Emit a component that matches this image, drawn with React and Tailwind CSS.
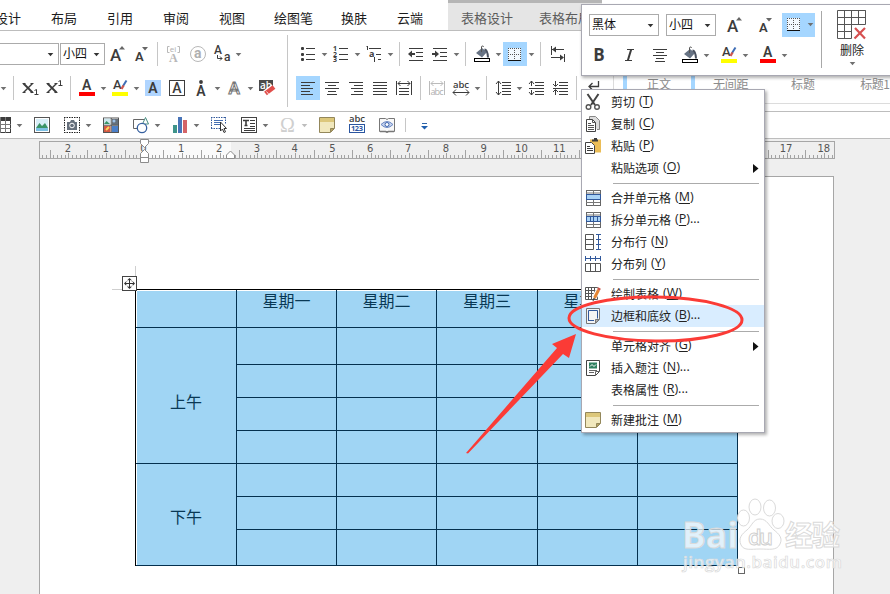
import React from "react";

const INK = "#3c3c3c";

function Icon({ children, w = 16, h = 16, className = "" }) {
  return (
    <svg width={w} height={h} viewBox={`0 0 ${w} ${h}`} fill="none" stroke={INK} className={`shrink-0 overflow-visible ${className}`}>
      {children}
    </svg>
  );
}

function Arrow({ className = "mx-1.5", color = "#707070" }) {
  return (
    <svg width="5" height="3" viewBox="0 0 5 3" className={`shrink-0 overflow-visible ${className}`}>
      <path d="M-.3 0H5.3L2.5 3.2z" fill={color} />
    </svg>
  );
}

const Sep = ({ className = "h-6" }) => <div className={`w-px shrink-0 bg-[#c6c6c6] ${className}`} />;

function Lines({ rows }) {
  return rows.map(([x1, x2, y]) => <path key={y} d={`M${x1} ${y + 0.5}H${x2}`} />);
}

function T({ x, y, s, children, fill = INK, ...rest }) {
  return (
    <text x={x} y={y} fontSize={s} fill={fill} stroke="none" fontFamily="Open Sans, sans-serif" {...rest}>
      {children}
    </text>
  );
}

const Grow = () => (
  <Icon>
    <T x="0" y="15" s="17" fontWeight="500" fontFamily="Roboto, sans-serif">A</T>
    <path d="M9 3.500h6L12 0z" fill="#666" stroke="none" />
  </Icon>
);
const Shrink = () => (
  <Icon>
    <T x="1" y="15" s="13" fontWeight="600" fontFamily="Roboto, sans-serif">A</T>
    <path d="M8 1h6L11 4.500z" fill="#666" stroke="none" />
  </Icon>
);
const Phonetic = () => (
  <Icon>
    <path d="M3.500 .5H1.500v6h2M11.500 .5h2v6h-2" stroke="#b8b8b8" />
    <T x="3.800" y="6" s="8" fill="#b0b0b0">ei</T>
    <T x="3" y="16" s="12" fill="#b8b8b8" fontFamily="Liberation Serif, serif" fontWeight="700">A</T>
  </Icon>
);
const Circled = () => (
  <Icon>
    <circle cx="8" cy="8" r="7.500" stroke="#b8b8b8" />
    <T x="4" y="12" s="14" fill="#b0b0b0" fontWeight="700" fontFamily="Roboto, sans-serif">a</T>
  </Icon>
);
const ChangeCase = () => (
  <Icon>
    <T x="0" y="8" s="12" fontFamily="Roboto, sans-serif" fontWeight="500">A</T>
    <T x="10" y="15" s="12" fontFamily="Roboto, sans-serif" fontWeight="500">a</T>
    <path d="M3.500 9v3.500H8M6 10.500l2 2-2 2" />
  </Icon>
);
const Script = ({ sup }) => (
  <Icon>
    <path d="M1.500 3.500L10.500 12.500" strokeWidth="2" />
    <path d="M10.500 3.500L1.500 12.500" strokeWidth="1.500" />
    <path d="M.5 3.500h3M8.500 3.500h3M.5 12.500h3M8.500 12.500h3" />
    <path d={sup ? "M12.500 1.500l2-1V5.500M12.500 5.500h4" : "M12.500 10.500l2-1v5M12.500 14.500h4"} />
  </Icon>
);
const FontColor = () => (
  <Icon>
    <T x="3" y="10" s="14" fontWeight="600" fontFamily="Roboto, sans-serif">A</T>
    <rect x="0" y="12" width="16" height="4" fill="#f00" stroke="none" />
  </Icon>
);
const Marker = () => (
  <Icon>
    <T x="1" y="9" s="13" fontWeight="500" fontFamily="Roboto, sans-serif">A</T>
    <path d="M14.500 .5L11 6" stroke="#3e6db5" strokeWidth="2" />
    <path d="M11.500 5.500L9.500 9" stroke="#d0584f" strokeWidth="2.400" />
    <rect x="0" y="12" width="16" height="4" fill="#ff0" stroke="none" />
  </Icon>
);
const Shaded = () => (
  <Icon>
    <rect width="16" height="16" fill="#b0d5ff" stroke="none" />
    <T x="3.300" y="13" s="14" fontWeight="600" fontFamily="Roboto, sans-serif">A</T>
  </Icon>
);
const Boxed = () => (
  <Icon>
    <rect x=".5" y=".5" width="15" height="15" />
    <T x="3.300" y="13" s="14" fontWeight="500" fontFamily="Roboto, sans-serif">A</T>
  </Icon>
);
const Dotted = () => (
  <Icon>
    <circle cx="8" cy="2" r="1.900" fill={INK} stroke="none" />
    <T x="3.300" y="16" s="14" fontWeight="600" fontFamily="Roboto, sans-serif">A</T>
  </Icon>
);
const Outlined = () => (
  <Icon>
    <T x="2.500" y="14" s="17" fill="#fff" fontWeight="600" strokeWidth="1" fontFamily="Roboto, sans-serif" style={{ stroke: "#777" }}>A</T>
  </Icon>
);
const Eraser = () => (
  <Icon>
    <rect x="0" y="0" width="14" height="11" fill="#4a4a4a" stroke="none" />
    <T x="1" y="9" s="10" fill="#fff" fontWeight="600">ab</T>
    <path d="M6 13.500L14.500 7" stroke="#fff" strokeWidth="6.500" />
    <path d="M6.500 13.500L15 7" stroke="#e14e4a" strokeWidth="4.500" />
    <path d="M7.500 11.500l2.500 3" stroke="#fff" strokeWidth=".8" />
  </Icon>
);
const Bullets = () => (
  <Icon>
    {[2, 8, 13].map((y) => (
      <React.Fragment key={y}>
        <rect x="1" y={y - 1} width="3" height="3" rx="1" fill={INK} stroke="none" />
        <path d={`M6 ${y + 0.5}H15`} />
      </React.Fragment>
    ))}
  </Icon>
);
const Numbering = () => (
  <Icon>
    {[1, 2, 3].map((n) => (
      <T key={n} x="0" y={n * 5.400} s="7" fontWeight="700">{n}</T>
    ))}
    <Lines rows={[[6, 15, 2], [6, 15, 8], [6, 15, 13]]} />
  </Icon>
);
const Multilevel = () => (
  <Icon>
    <path d="M.5 1l1-1v4M3 2.500h12M10 8.500h5M12 13.500h3M8.500 11v5" />
    <T x="3" y="11" s="9" fontWeight="700">a</T>
  </Icon>
);
const Indent = ({ right }) => (
  <Icon>
    <path d="M1 2.500h14M8 6.500h7M8 10.500h7M1 14.500h14" strokeWidth="1.100" />
    <path d={right ? "M0 8h3" : "M3 8h4"} strokeWidth="2" />
    <path d={right ? "M3 4.500L7 8 3 11.500z" : "M4 4.500L0 8l4 3.500z"} fill={INK} stroke="none" />
  </Icon>
);
const Bucket = () => (
  <Icon>
    <path d="M8 2L2 7l6 4.500L13 6z" fill="#677384" stroke="none" />
    <path d="M7.500 6V1a1 1 0 0 1 2 0" stroke="#555" strokeWidth="1" />
    <path d="M10.500 3.500q3 0 3.500 8" stroke="#4a5260" strokeWidth="2" />
    <rect x=".5" y="12.500" width="15" height="3" fill="#fff" stroke="#000" />
  </Icon>
);
const Borders = () => (
  <Icon w={13} h={14}>
    <rect width="13" height="13" fill="#fff" stroke="none" opacity=".85" />
    <path d="M0 .5h13M.5 0v12M6.500 0v12M12.500 0v12M0 6.500h13" stroke="#555" strokeDasharray="1 1" />
    <path d="M0 12.500h13" stroke="#111" strokeWidth="1" />
  </Icon>
);
const TabStops = () => (
  <Icon>
    <path d="M2.500 0v9M15.500 8v8M3 3.500h12M2 11.500h12" />
    <path d="M3 3.500l4-3v6zM15 11.500l-4-3v6z" fill={INK} stroke="none" />
  </Icon>
);
const Align = ({ kind }) => {
  const rows = {
    left: [[1, 15, 2], [1, 10, 5], [1, 13, 8], [1, 10, 11], [1, 13, 14]],
    center: [[1, 15, 2], [4, 12, 5], [1, 15, 8], [4, 12, 11], [3, 13, 14]],
    right: [[1, 15, 2], [6, 15, 5], [3, 15, 8], [6, 15, 11], [3, 15, 14]],
    full: [[1, 15, 2], [1, 15, 5], [1, 15, 8], [1, 15, 11], [1, 15, 14]],
  };
  return <Icon><Lines rows={rows[kind]} /></Icon>;
};
const Distribute = () => (
  <Icon>
    <path d="M.5 1v14M15.500 1v14M2 3.500h12M4.500 1L2 3.500 4.500 6M11.500 1L14 3.500 11.500 6M3 8.500h10M3 11.500h10M3 14.500h10" />
  </Icon>
);
const FitText = () => (
  <Icon>
    <path d="M.5 1v14M15.500 1v14M2 3.500h12M4.500 1L2 3.500 4.500 6M11.500 1L14 3.500 11.500 6" stroke="#bbb" />
    <T x="1.500" y="14.500" s="9" fill="#b0b0b0" textLength="13">abc</T>
  </Icon>
);
const CharScale = () => (
  <Icon>
    <T x="0" y="7.500" s="9.500" fontWeight="600" textLength="16">abc</T>
    <path d="M0 12.500h16M3 9.500l-3 3 3 3M13 9.500l3 3-3 3" />
  </Icon>
);
const LineSpacing = () => (
  <Icon>
    <path d="M3.500 1v14M1 4l2.500-3L6 4M1 12l2.500 3L6 12" />
    <Lines rows={[[7, 16, 2], [7, 16, 5], [7, 16, 8], [7, 16, 11], [7, 16, 14]]} />
  </Icon>
);
const ParaSpace = ({ down }) => (
  <Icon>
    <path d={down ? "M3.500 1v5M1 4l2.500 2.500L6 4M3.500 15v-5M1 12l2.500-2.500L6 12" : "M3.500 6V1M1 4l2.500-3L6 4M3.500 10v5M1 12l2.500 3L6 12"} />
    <Lines rows={[[7, 16, 2], [7, 16, 5], [1, 16, 8], [7, 16, 11], [7, 16, 14]]} />
  </Icon>
);

const TableIcon = () => (
  <Icon className="-ml-[5px]">
    <rect x=".5" y=".5" width="15" height="15" fill="#fff" />
    <path d="M0 2h16" strokeWidth="4" />
    <path d="M0 7.500h16M0 11.500h16M5.500 0v16M10.500 0v16" stroke="#777" />
  </Icon>
);
const Picture = () => (
  <Icon>
    <rect x=".5" y=".5" width="15" height="15" fill="#fff" stroke="#555" />
    <rect x="2" y="2" width="12" height="9" fill="#d8eef8" stroke="none" />
    <path d="M2 11l3.500-5L8 9l3-3 3 5z" fill="#3a9468" stroke="none" />
    <path d="M2 12.500h12" stroke="#7cc0e4" strokeWidth="3" />
  </Icon>
);
const Camera = () => (
  <Icon>
    <path d="M.5 0v16M15.500 0v16M0 .5h16M0 15.500h16" strokeDasharray="1.500 1" stroke="#222" />
    <path d="M3 5h3l1-2h3l1 2h2v8H3z" fill="#66707c" stroke="none" />
    <circle cx="8" cy="8.500" r="2.300" stroke="#fff" />
  </Icon>
);
const ClipArt = () => (
  <Icon>
    <rect x=".5" y="1" width="15" height="14.500" fill="#fff" stroke="#555" />
    <rect x="1" y="1.500" width="6.500" height="6" fill="#cfe7ee" stroke="none" />
    <path d="M1 7l2.500-3L7 7z" fill="#3a9468" stroke="none" />
    <rect x="9" y="2" width="6" height="6" fill="#65707c" stroke="none" />
    <circle cx="11" cy="4" r="1.500" fill="#9fc2e8" stroke="none" />
    <rect x="1" y="9" width="6.500" height="6" fill="#d45a45" stroke="none" />
    <path d="M3 13l3-3" stroke="#ffd55a" strokeWidth="2" />
    <rect x="9" y="9" width="6" height="6" fill="#4b7fc8" stroke="none" />
    <path d="M8.250 1v15M1 8.250h14" stroke="#555" />
  </Icon>
);
const Shapes = () => (
  <Icon>
    <path d="M5 11.500H.5v-9H11" stroke="#666" />
    <path d="M12.500 .5L9.500 7h6z" stroke="#488b80" fill="#fff" />
    <circle cx="9" cy="11" r="4.700" fill="#fff" stroke="#36609f" strokeWidth="1.300" />
  </Icon>
);
const Chart = () => (
  <Icon>
    <rect x="1" y="8" width="4" height="8" fill="#3e948a" stroke="none" />
    <rect x="6" y="0" width="4" height="16" fill="#4874b8" stroke="none" />
    <rect x="11" y="3" width="4" height="13" fill="#d46468" stroke="none" />
  </Icon>
);
const SelectPane = () => (
  <Icon>
    <path d="M.5 0v12M14.500 0v7M0 .5h15M0 11.500h9" strokeDasharray="1.500 1" stroke="#31589b" />
    <path d="M3 3.500h9M3 5.500h6M3 7.500h6" stroke="#456fb3" />
    <path d="M9.500 5v9l2-2 1.500 3.500 1.500-.7-1.500-3.300h2.500z" fill="#fff" stroke="#333" />
  </Icon>
);
const TextBox = () => (
  <Icon>
    <rect x=".5" y=".5" width="15" height="15" fill="#fff" stroke="#444" />
    <path d="M2 3.500h6M5 3v6M3.500 8.500h3" strokeWidth="1.600" />
    <path d="M9 3.500h5M9 6.500h5M9 9.500h5M3 11.500h11M3 13.500h11" />
  </Icon>
);
const Omega = () => (
  <Icon>
    <T x="0" y="15" s="20" fill="#cfcfcf" fontFamily="Liberation Serif, serif">Ω</T>
  </Icon>
);
const Note = () => (
  <Icon>
    <path d="M.5 .5h15v11l-4 4H.5z" fill="#f1e8bd" stroke="#93875b" />
    <rect x="1" y="1" width="14" height="4" fill="#dcc77b" stroke="none" />
    <path d="M11.500 15v-3.500H15z" fill="#bda85f" stroke="#93875b" />
  </Icon>
);
const WordCount = () => (
  <Icon>
    <T x="0" y="5" s="9.500" fontWeight="600" textLength="16">abc</T>
    <rect x=".5" y="7.500" width="15" height="8" fill="#fff" stroke="#2b559f" />
    <T x="2" y="14" s="7.500" fontWeight="700" fill="#2b559f" textLength="12">123</T>
  </Icon>
);
const ReadMode = () => (
  <Icon>
    <path d="M.5 1.500h6l1.500 1 1.500-1h6v13h-6L8 15l-1.500-.5h-6z" fill="#f8f8f8" stroke="#777" />
    <path d="M1 14.500h5.500l1.500.7 1.500-.7H15" strokeWidth="1.500" stroke="#777" />
    <path d="M2 7.500q6-6 12 0q-6 6-12 0z" fill="#c6d3ee" stroke="#6b88c4" />
    <circle cx="8" cy="7.500" r="2" stroke="#3f66ad" fill="#fff" />
  </Icon>
);

/* Context menu icons */
const Scissors = () => (
  <Icon>
    <path d="M2.500 0L10 11M13.500 0L6 11" stroke="#444" strokeWidth="2" />
    <circle cx="3.500" cy="13" r="2.300" stroke="#555" strokeWidth="1.400" />
    <circle cx="12" cy="13" r="2.300" stroke="#555" strokeWidth="1.400" />
  </Icon>
);
const Copy = () => (
  <Icon>
    <path d="M4.500 3V.5h6l4 4v9H12" fill="#ddd" stroke="#888" />
    <path d="M1.500 3.500h6l3 3v9h-9z" fill="#fff" stroke="#444" />
    <path d="M3 7.500h3M3 9.500h6M3 11.500h6M3 13.500h6M7.500 3.500v3h3" stroke="#555" />
  </Icon>
);
const Paste = () => (
  <Icon>
    <rect x="5" y="1.500" width="11" height="13" fill="#ebbd57" stroke="none" />
    <path d="M7 2.500h6M9 1h3" strokeWidth="2" />
    <path d="M.5 4.500h6l3 3v8h-9z" fill="#fff" stroke="#444" />
    <path d="M2 8.500h3M2 10.500h6M2 12.500h6" />
  </Icon>
);
const Merge = ({ split }) => (
  <Icon>
    <rect x="1.500" y=".5" width="14" height="15" fill="#fff" stroke="#666" />
    <path d="M8.500 0v16M1 12.500h14M1 3h14" stroke="#777" />
    <rect x="1.500" y="4.500" width="14" height="5" fill="#a9d2f5" stroke="#31589b" />
    {split && <path d="M5.500 5v5M8.500 5v5M12.500 5v5" stroke="#31589b" />}
  </Icon>
);
const DistRows = () => (
  <Icon>
    <path d="M.5 .5h8v15h-8zM.5 5.500h8M.5 10.500h8" stroke="#555" />
    <path d="M13.500 0v16M11 .5h5M11 5.500h5M11 10.500h5M11 15.500h5" stroke="#31589b" />
  </Icon>
);
const DistCols = () => (
  <Icon>
    <path d="M.5 7.500h15v8H.5zM5.500 7.500v8M10.500 7.500v8" stroke="#555" />
    <path d="M0 2.500h16M.5 0v5M5.500 0v5M10.500 0v5M15.500 0v5" stroke="#31589b" />
  </Icon>
);
const DrawTable = () => (
  <Icon>
    <path d="M.5 1.500h12v12H.5zM3.500 1v13M6.500 1v13M9.500 1v13M0 4.500h13M0 7.500h13M0 10.500h13" stroke="#555" />
    <path d="M14 3L9 12" stroke="#fff" strokeWidth="5" />
    <path d="M13.500 4L9.500 12" stroke="#e58532" strokeWidth="3" />
    <path d="M14.500 2l-1 2" stroke="#cb5246" strokeWidth="3" />
    <path d="M9 12l-1 3" />
  </Icon>
);
const PageBorder = () => (
  <Icon>
    <path d="M1.500 .5h13v11l-4 4h-9z" fill="#f4f4f4" stroke="#777" />
    <path d="M3.500 12.500v-10h9v8M3 12.500h6" stroke="#31589b" />
    <path d="M10.500 15v-3.500H14z" fill="#bbb" stroke="#777" />
  </Icon>
);
const Caption = () => (
  <Icon>
    <path d="M1.500 .5h13v11l-4 4h-9z" fill="#fff" stroke="#444" />
    <rect x="4" y="2.500" width="8" height="6" fill="#2f8060" stroke="none" />
    <path d="M5 6.500l2-2 2 2 2-2" stroke="#fff" />
    <path d="M4 10.500h8M4 12.500h5M10.500 15v-3.500H14" stroke="#666" />
  </Icon>
);

const DeleteTable = () => (
  <Icon w={30} h={30}>
    <path d="M.5 .5h28v14M.5 .5v28h14v-28M.5 7.500h28v-7M.5 14.500h28M.5 21.500h14M7.500 .5v28M21.500 .5v14" stroke="#555" />
    <path d="M18 18l10 10.500M28 18L17.500 28.500" stroke="#d65050" strokeWidth="2.200" />
  </Icon>
);

function Combo({ label, className }) {
  return (
    <div className={`flex shrink-0 items-center justify-between border border-[#ababab] bg-white pl-[2px] pr-[5px] text-[12px] text-[#111] ${className}`}>
      <span className="-mt-[2px]">{label}</span>
      <Arrow className="" color="#333" />
    </div>
  );
}

const Tab = ({ children, className = "" }) => <span className={`shrink-0 ${className}`}>{children}</span>;

function TabBar() {
  return (
    <div className="flex h-[31px] border-b border-[#bdbdbd] bg-white text-[13px] leading-[20px] text-[#1c1c1c]">
      <div className="flex w-[448px] shrink-0 gap-[30px] pt-[8px]">
        <Tab className="-ml-[5px]">设计</Tab>
        <Tab>布局</Tab>
        <Tab>引用</Tab>
        <Tab>审阅</Tab>
        <Tab>视图</Tab>
        <Tab className="-ml-[1px]">绘图笔</Tab>
        <Tab className="-ml-[2px]">换肤</Tab>
        <Tab>云端</Tab>
      </div>
      <div className="flex w-[154px] shrink-0 gap-[26px] overflow-hidden border-t-[3px] border-[#b5b5b5] bg-[#e5e5e5] pl-[13px] pt-[5px] text-[#5c5c5c]">
        <Tab>表格设计</Tab>
        <Tab>表格布局</Tab>
      </div>
    </div>
  );
}

const G = ({ children, className = "" }) => <div className={`flex shrink-0 items-center gap-2 ${className}`}>{children}</div>;

function Ribbon() {
  return (
    <div className="flex h-[81px] border-b border-[#bdbdbd] bg-white pt-1">
      <div className="flex w-[287px] shrink-0 flex-col gap-[10px] pt-[7px]">
        <div className="flex h-6 items-center">
          <Combo label="" className="-ml-[1px] h-[22px] w-[60px]" />
          <Combo label="小四" className="ml-[1px] mr-[5px] h-[22px] w-[45px]" />
          <G><Grow /><Shrink /></G>
          <Sep className="mx-[7px] h-6" />
          <G className="ml-[1px]"><Phonetic /><Circled /><ChangeCase /></G>
          <Arrow />
        </div>
        <div className="flex h-6 items-center">
          <Arrow className="ml-[1px] mr-[7px]" />
          <G><Sep /><Script /><Script sup /><Sep /><FontColor /></G>
          <Arrow /><Marker /><Arrow />
          <G><Shaded /><Boxed /><Dotted /></G>
          <Arrow /><Outlined /><Arrow /><Eraser />
        </div>
      </div>
      <Sep className="h-[72px]" />
      <div className="flex w-[289px] shrink-0 flex-col gap-[10px] pt-[7px]">
        <div className="flex h-6 items-center pl-3">
          <Bullets /><Arrow /><Numbering /><Arrow /><Multilevel /><Arrow />
          <G><Sep /><Indent /><Indent right /></G>
          <Arrow />
          <G><Sep /><Bucket /></G>
          <Arrow className="ml-1.5 mr-[2px]" />
          <div className="flex h-6 w-6 shrink-0 items-center bg-[#a5d6ff] pl-[5px] pt-[2px]"><Borders /></div>
          <Arrow className="ml-[2px] mr-1.5" />
          <G><Sep /><TabStops /></G>
        </div>
        <div className="flex h-6 items-center pl-2">
          <div className="mr-1 flex size-6 shrink-0 items-center justify-center bg-[#a5d6ff]"><Align kind="left" /></div>
          <G><Align kind="center" /><Align kind="right" /><Align kind="full" /><Distribute /><Sep /><FitText /><CharScale /></G>
          <Arrow />
          <G><Sep /><LineSpacing /></G>
          <Arrow />
          <G><ParaSpace /><ParaSpace down /><Sep /></G>
        </div>
      </div>
      <div className="flex min-w-0 flex-1 pt-[41px]">
        <Icon className="ml-[9px] mt-[2px]"><path d="M12.500 3v5.500H3M6.500 5L3 8.500 6.500 12" strokeWidth="1.300" /></Icon>
        <div className="ml-[11px] h-7 flex-1 overflow-hidden border-b border-l border-[#dcdcdc] text-[12px] leading-4 text-[#8c8c8c]">
          <div className="flex whitespace-nowrap leading-[15px]">
            <div className="ml-[9px] flex h-7 w-[72px] shrink-0 justify-center border-x-4 border-[#a5d6ff]">正文</div>
            <span className="ml-[18px] tracking-[-0.3px]">无间距</span>
            <span className="ml-[43px]">标题</span>
            <span className="ml-[45px] tracking-[-0.5px]">标题1</span>
          </div>
        </div>
      </div>
    </div>
  );
}

function QuickBar() {
  return (
    <div className="flex h-[27px] items-center border-b border-[#bdbdbd] bg-white">
      <TableIcon /><Arrow className="ml-1.5 mr-3" />
      <div className="flex gap-[14px]"><Picture /><Camera /></div>
      <Arrow className="ml-1.5 mr-3" />
      <div className="flex gap-[14px]"><ClipArt /><Shapes /></div>
      <Arrow className="ml-1.5 mr-3" /><Chart /><Arrow className="ml-1.5 mr-3" />
      <div className="flex gap-[14px]"><SelectPane /><TextBox /></div>
      <Arrow className="ml-1.5 mr-3" /><Omega /><Arrow className="ml-1.5 mr-3" color="#bdbdbd" />
      <div className="flex gap-[14px]"><Note /><WordCount /><ReadMode /></div>
      <Sep className="ml-[10px] h-[14px]" />
      <svg width="7" height="7" viewBox="0 0 7 7" className="ml-[15px] mt-[2px]">
        <path d="M1 .5h5" stroke="#2b63a8" />
        <path d="M0 3h7L3.500 6.500z" fill="#1f5fae" />
      </svg>
    </div>
  );
}

const UNIT = 37.8;

function Ruler() {
  const ticks = [];
  for (let i = -27; i <= 182; i++) {
    const x = Math.round(104 + (i * UNIT) / 10) + 0.5;
    const h = i % 10 === 0 ? 5 : i % 5 === 0 ? 8 : 3;
    ticks.push(`M${x} 16V${16 - h}`);
  }
  const labels = [];
  for (let n = -2; n <= 18; n++) labels.push(Math.abs(n));
  return (
    <div className="relative ml-[39px] mt-[2px] h-[18px] w-[796px] border border-[#a6a6a6] bg-[#efefef]">
      <div className="flex h-4 overflow-hidden bg-[linear-gradient(to_right,transparent_104px,#fafafa_104px,#fafafa_191px,transparent_191px)] pl-[9px] font-['DejaVu_Sans'] text-[10px] leading-[13px] text-[#555]">
        {labels.map((n, i) => (
          <span key={i} className="w-[37.8px] shrink-0 text-center">{n}</span>
        ))}
      </div>
      <svg width="794" height="24" viewBox="0 0 794 24" fill="none" className="absolute left-0 top-0 overflow-visible">
        <path d={ticks.join("")} stroke="#a3a3a3" />
        <path d="M100.500 -2.500h8v4l-4 4-4-4zM104.500 7.500l4 4v9h-8v-9zM100.500 15.500h8" fill="#fff" stroke="#8c8c8c" />
        <path d="M190.500 9l4 4v3.500h-8V13z" fill="#fff" stroke="#8c8c8c" />
      </svg>
    </div>
  );
}

const Cell = ({ children, className = "" }) => (
  <div className={`flex justify-center border-b border-r border-[#04304e] ${className}`}>{children}</div>
);

function DocTable() {
  const days = ["星期一", "星期二", "星期三", "星期四", "星期五"];
  const blanks = (n, k) => Array.from({ length: n }, (_, i) => <Cell key={k + i} />);
  return (
    <div className="w-[603px] border-l border-t border-black">
      <div className="grid grid-cols-[101px_100px_100px_101px_100px_100px] grid-rows-[38px_37px_33px_33px_33px_33px_33px_36px] bg-[#a0d5f4] text-[16px] leading-[21px] text-[#093854] shadow-[inset_1px_1px_0_#fff]">
        <Cell />
        {days.map((d) => <Cell key={d}>{d}</Cell>)}
        <Cell className="row-span-4 items-center pt-[11px]">上午</Cell>
        {blanks(20, "a")}
        <Cell className="row-span-3 items-center pt-[3px]">下午</Cell>
        {blanks(15, "b")}
      </div>
    </div>
  );
}

function Page() {
  return (
    <div className="relative ml-[39px] mt-[17px] h-[418px] w-[795px] border border-b-0 border-[#a6a6a6] bg-white pl-[95px] pt-[112px]">
      <DocTable />
      <div className="absolute left-[95px] top-[89px] h-[10px] w-px bg-[#cfcfcf]" />
      <div className="absolute left-[72px] top-[112px] h-px w-[10px] bg-[#cfcfcf]" />
      <div className="absolute left-[82px] top-[99px] flex size-[15px] items-center justify-center border border-[#444] bg-white">
        <svg width="11" height="11" viewBox="0 0 11 11" fill="none" stroke="#333">
          <circle cx="5.500" cy="5.500" r="3.500" stroke="#888" strokeDasharray="2 1" />
          <path d="M5.500 1v9M1 5.500h9" />
          <path d="M5.500 0l2 2h-4zM5.500 11l2-2h-4zM0 5.500l2-2v4zM11 5.500l-2-2v4z" fill="#333" stroke="none" />
        </svg>
      </div>
      <div className="absolute left-[698px] top-[390px] size-[7px] border border-[#666] bg-white" />
    </div>
  );
}

function MiniToolbar() {
  return (
    <div className="absolute left-[581px] top-[4px] flex h-[72px] w-[320px] border border-[#a8a8b2] bg-white shadow-[1px_2px_3px_rgba(0,0,0,0.3)]">
      <div className="flex w-[239px] shrink-0 flex-col pt-2">
        <div className="flex h-6 items-center pl-[7px]">
          <Combo label="黑体" className="h-[22px] w-[70px]" />
          <Combo label="小四" className="ml-[7px] h-[22px] w-[50px]" />
          <div className="ml-[11px] flex gap-[15px]"><Grow /><Shrink /></div>
          <div className="ml-[8px] flex h-6 w-[33px] items-center bg-[#a5d6ff] pl-[5px]">
            <Borders /><Arrow className="-mt-[1px] ml-2" />
          </div>
        </div>
        <div className="mt-1.5 flex h-6 items-center pl-[10px]">
          <span className="w-[14px] text-center font-['Open_Sans'] text-[17px] font-bold leading-6 text-[#3c3c3c]">B</span>
          <Icon className="ml-[16px]"><path d="M5 2.500h7M3 13.500h7" strokeWidth="1.200" /><path d="M9.200 2.500l-3.400 11" strokeWidth="2" /></Icon>
          <div className="ml-[14px]"><Align kind="center" /></div>
          <div className="ml-[14px] flex items-center"><Bucket /><Arrow /></div>
          <div className="ml-[6px] flex items-center"><Marker /><Arrow /></div>
          <div className="ml-[6px] flex items-center"><FontColor /><Arrow /></div>
        </div>
      </div>
      <div className="mt-[6px] h-[57px] w-px bg-[#a8a8a8]" />
      <div className="flex w-[60px] flex-col items-center pt-[5px] text-[12px] text-[#222]">
        <DeleteTable />
        <span className="mt-[1px] leading-[18px]">删除</span>
        <Arrow className="mt-[3px]" />
      </div>
    </div>
  );
}

function Item({ icon, label, k, dots, sub, active }) {
  return (
    <div className={`flex h-[22px] items-center pl-[3px] pr-[5px] ${active ? "bg-[#d9edff]" : ""}`}>
      <div className="w-[26px] shrink-0">{icon}</div>
      <span className="-mt-px">{label}</span>
      <span className="-mt-px ml-1 flex-1 font-['Open_Sans'] text-[12.5px]">
        (<span className="underline underline-offset-2">{k}</span>){dots && "..."}
      </span>
      {sub && <svg width="6" height="9" viewBox="0 0 6 9"><path d="M0 0l5.500 4.500L0 9z" fill="#111" /></svg>}
    </div>
  );
}

const Rule = () => <div className="mb-[3px] ml-[31px] mr-[5px] mt-1 h-px bg-[#ababab]" />;

function ContextMenu() {
  return (
    <div className="absolute left-[581px] top-[89px] h-[344px] w-[184px] border border-[#a8a8b2] bg-white pt-px text-[12px] text-[#222] shadow-[2px_2px_3px_rgba(0,0,0,0.3)]">
      <Item icon={<Scissors />} label="剪切" k="T" />
      <Item icon={<Copy />} label="复制" k="C" />
      <Item icon={<Paste />} label="粘贴" k="P" />
      <Item label="粘贴选项" k="O" sub />
      <Rule />
      <Item icon={<Merge />} label="合并单元格" k="M" />
      <Item icon={<Merge split />} label="拆分单元格" k="P" dots />
      <Item icon={<DistRows />} label="分布行" k="N" />
      <Item icon={<DistCols />} label="分布列" k="Y" />
      <Rule />
      <Item icon={<DrawTable />} label="绘制表格" k="W" />
      <Item icon={<PageBorder />} label="边框和底纹" k="B" dots active />
      <Rule />
      <Item label="单元格对齐" k="G" sub />
      <Item icon={<Caption />} label="插入题注" k="N" dots />
      <Item label="表格属性" k="R" dots />
      <Rule />
      <Item icon={<Note />} label="新建批注" k="M" />
    </div>
  );
}

function Annotation() {
  return (
    <svg width="190" height="170" viewBox="460 290 190 170" className="absolute left-[460px] top-[290px] overflow-visible" fill="none">
      <ellipse cx="655.500" cy="319" rx="86.500" ry="22" stroke="#fb3b36" strokeWidth="3" transform="rotate(.6 655 319)" />
      <path d="M466 453L557 348l-5-4 24-10-7 24-6-4L468 453.500z" fill="#fb3b36" />
    </svg>
  );
}

function Watermark() {
  return (
    <svg width="165" height="85" viewBox="680 495 165 85" className="absolute left-[680px] top-[495px] overflow-visible" fill="#fff" fillOpacity=".7" stroke="#dadada" strokeWidth="1">
      <text x="682" y="548" fontSize="36" fontWeight="700" fontFamily="Open Sans, sans-serif" textLength="56" lengthAdjust="spacingAndGlyphs">Bai</text>
      <ellipse cx="743.500" cy="518" rx="6" ry="8" />
      <ellipse cx="755" cy="507" rx="6" ry="8" />
      <ellipse cx="769.500" cy="508" rx="6" ry="8" />
      <ellipse cx="778" cy="521" rx="6" ry="7.500" />
      <path d="M760 519c7 0 9 7 14 11 5 4 9 8 6 14-3 7-11 5-20 5s-16 2-19-4c-3-7 1-11 6-15s6-11 13-11z" />
      <text x="748" y="545" fontSize="22" fontWeight="600" fontFamily="Open Sans, sans-serif" stroke="#cfcfcf" textLength="25">du</text>
      <text x="785" y="546" fontSize="28" fontWeight="700" fontFamily="Noto Sans CJK SC, sans-serif" textLength="55">经验</text>
      <text x="683" y="568" fontSize="17" fontWeight="600" fontFamily="Open Sans, sans-serif" strokeWidth=".7" textLength="159">jingyan.baidu.com</text>
    </svg>
  );
}

export default function App() {
  return (
    <div className="relative h-[594px] w-[890px] overflow-hidden whitespace-nowrap bg-[#efefef] font-['Noto_Sans_CJK_SC',sans-serif]">
      <TabBar />
      <Ribbon />
      <QuickBar />
      <Ruler />
      <Page />
      <MiniToolbar />
      <ContextMenu />
      <Annotation />
      <Watermark />
    </div>
  );
}
